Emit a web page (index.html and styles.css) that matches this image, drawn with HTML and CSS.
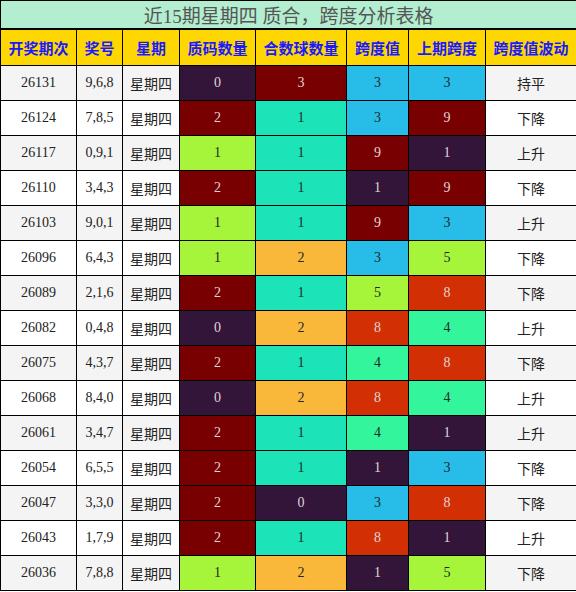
FILE: index.html
```html
<!DOCTYPE html>
<html lang="zh-CN">
<head>
  <meta charset="UTF-8">
  <title>近15期星期四 质合，跨度分析表格</title>
  <link rel="stylesheet" href="styles.css">
</head>
<body>
  <table class="stats">
    <colgroup>
      <col class="w-issue"><col class="w-num"><col class="w-day"><col class="w-prime">
      <col class="w-comp"><col class="w-span"><col class="w-last"><col class="w-trend">
    </colgroup>
    <tr class="title"><td colspan="8">近15期星期四 质合，跨度分析表格</td></tr>
    <tr class="head">
      <th>开奖期次</th><th>奖号</th><th>星期</th><th>质码数量</th>
      <th>合数球数量</th><th>跨度值</th><th>上期跨度</th><th>跨度值波动</th>
    </tr>
    <tr><td>26131</td><td>9,6,8</td><td class="cn">星期四</td><td class="purple">0</td><td class="maroon">3</td><td class="sky">3</td><td class="sky">3</td><td class="cn">持平</td></tr>
    <tr><td>26124</td><td>7,8,5</td><td class="cn">星期四</td><td class="maroon">2</td><td class="teal">1</td><td class="sky">3</td><td class="maroon">9</td><td class="cn">下降</td></tr>
    <tr><td>26117</td><td>0,9,1</td><td class="cn">星期四</td><td class="lime">1</td><td class="teal">1</td><td class="maroon">9</td><td class="purple">1</td><td class="cn">上升</td></tr>
    <tr><td>26110</td><td>3,4,3</td><td class="cn">星期四</td><td class="maroon">2</td><td class="teal">1</td><td class="purple">1</td><td class="maroon">9</td><td class="cn">下降</td></tr>
    <tr><td>26103</td><td>9,0,1</td><td class="cn">星期四</td><td class="lime">1</td><td class="teal">1</td><td class="maroon">9</td><td class="sky">3</td><td class="cn">上升</td></tr>
    <tr><td>26096</td><td>6,4,3</td><td class="cn">星期四</td><td class="lime">1</td><td class="orange">2</td><td class="sky">3</td><td class="lime">5</td><td class="cn">下降</td></tr>
    <tr><td>26089</td><td>2,1,6</td><td class="cn">星期四</td><td class="maroon">2</td><td class="teal">1</td><td class="lime">5</td><td class="red">8</td><td class="cn">下降</td></tr>
    <tr><td>26082</td><td>0,4,8</td><td class="cn">星期四</td><td class="purple">0</td><td class="orange">2</td><td class="red">8</td><td class="green">4</td><td class="cn">上升</td></tr>
    <tr><td>26075</td><td>4,3,7</td><td class="cn">星期四</td><td class="maroon">2</td><td class="teal">1</td><td class="green">4</td><td class="red">8</td><td class="cn">下降</td></tr>
    <tr><td>26068</td><td>8,4,0</td><td class="cn">星期四</td><td class="purple">0</td><td class="orange">2</td><td class="red">8</td><td class="green">4</td><td class="cn">上升</td></tr>
    <tr><td>26061</td><td>3,4,7</td><td class="cn">星期四</td><td class="maroon">2</td><td class="teal">1</td><td class="green">4</td><td class="purple">1</td><td class="cn">上升</td></tr>
    <tr><td>26054</td><td>6,5,5</td><td class="cn">星期四</td><td class="maroon">2</td><td class="teal">1</td><td class="purple">1</td><td class="sky">3</td><td class="cn">下降</td></tr>
    <tr><td>26047</td><td>3,3,0</td><td class="cn">星期四</td><td class="maroon">2</td><td class="purple">0</td><td class="sky">3</td><td class="red">8</td><td class="cn">下降</td></tr>
    <tr><td>26043</td><td>1,7,9</td><td class="cn">星期四</td><td class="maroon">2</td><td class="teal">1</td><td class="red">8</td><td class="purple">1</td><td class="cn">上升</td></tr>
    <tr><td>26036</td><td>7,8,8</td><td class="cn">星期四</td><td class="lime">1</td><td class="orange">2</td><td class="purple">1</td><td class="lime">5</td><td class="cn">下降</td></tr>
  </table>
</body>
</html>
```

FILE: styles.css
```css
body { margin: 0; background: #fff; font-family: "Liberation Serif", "Noto Sans CJK SC", serif; }
.stats { width: 576px; border-collapse: collapse; table-layout: fixed; }
.w-issue { width: 76px; }
.w-num { width: 46px; }
.w-day { width: 57px; }
.w-prime { width: 76px; }
.w-comp { width: 91px; }
.w-span { width: 62px; }
.w-last { width: 77px; }
.w-trend { width: 91px; }
.stats td, .stats th { border: 1px solid #000; padding: 0; text-align: center; font-size: 14px; color: #222; }
.stats td { height: 34px; }
.stats tr:nth-child(odd) { background: #f4f4f4; }
.stats tr:nth-child(even) { background: #fff; }
.stats .title td { height: 25px; background: #b4eed0; color: #555; font-size: 19px; border-bottom-width: 2px; }
.stats .head th { height: 35px; background: #ffd700; color: #1a1aff; font-size: 15px; font-weight: bold; font-family: "Noto Sans CJK SC", sans-serif; }
.stats td.cn { font-family: "Noto Sans CJK SC", sans-serif; font-size: 14px; }
.purple { background: #331539; }
.maroon { background: #780000; }
.teal { background: #1de4b8; }
.sky { background: #28bce8; }
.lime { background: #a6f53b; }
.orange { background: #fab83b; }
.red { background: #d22f04; }
.green { background: #32f59c; }
.stats td.purple, .stats td.maroon, .stats td.red { color: #e0d4d8; }
.stats td.teal, .stats td.sky, .stats td.lime, .stats td.orange, .stats td.green { color: #1e2a28; }
```
